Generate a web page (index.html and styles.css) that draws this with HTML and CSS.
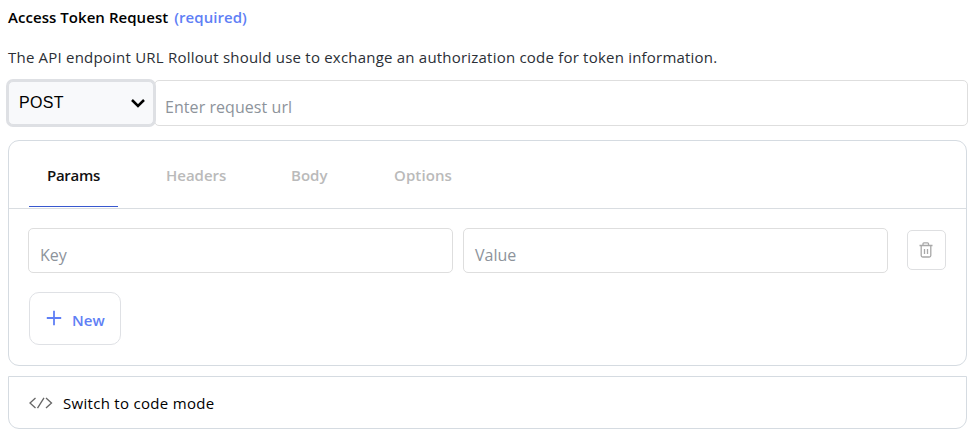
FILE: index.html
```html
<!DOCTYPE html>
<html lang="en">
<head>
<meta charset="utf-8">
<title>Access Token Request</title>
<link rel="stylesheet" href="styles.css">
</head>
<body>
<main class="form">
  <h2 class="title"><span class="name">Access Token Request</span><span class="required">(required)</span></h2>
  <p class="description">The API endpoint URL Rollout should use to exchange an authorization code for token information.</p>
  <div class="request">
    <button class="method" type="button"><span>POST</span>
      <svg class="chevron" width="16" height="10" viewBox="0 0 16 10"><path d="M2 2L8 8L14 2"/></svg>
    </button>
    <div class="field url"><span>Enter request url</span></div>
  </div>
  <section class="panel">
    <nav class="tabs">
      <a class="tab params active">Params</a>
      <a class="tab headers">Headers</a>
      <a class="tab body-tab">Body</a>
      <a class="tab options">Options</a>
    </nav>
    <div class="row">
      <div class="field"><span>Key</span></div>
      <div class="field"><span>Value</span></div>
      <button class="delete" type="button" aria-label="Delete">
        <svg width="14" height="16" viewBox="0 0 14 16"><path d="M.5 3.500H13.500M4 3V1.700Q4 .8 4.900 .8H8.600Q9.500 .8 9.500 1.700V3M2.200 3.500V13.500Q2.200 15 3.700 15H10.300Q11.800 15 11.800 13.500V3.500M5.500 7V12M8.500 7V12"/></svg>
      </button>
    </div>
    <button class="new" type="button">
      <svg width="16" height="16" viewBox="0 0 16 16"><path d="M8 .8V15.200M.8 8H15.200"/></svg>
      <span>New</span>
    </button>
  </section>
  <section class="code-mode">
    <svg width="24" height="12" viewBox="0 0 24 12"><path d="M6.500 1L1 6L6.500 11M15 .8L8.500 11.200M17 1L22.500 6L17 11"/></svg>
    <span>Switch to code mode</span>
  </section>
</main>
</body>
</html>
```
FILE: styles.css
```css
* { box-sizing: border-box; }
body {
  margin: 0;
  background: #fff;
  color: #000;
  font-family: "Open Sans", "Noto Sans", sans-serif;
  font-size: 15px;
}
svg { display: block; flex: none; fill: none; stroke: currentColor; }
button { margin: 0; background: #fff; font: inherit; }
.form { height: 437px; padding: 6px 10px 0 8px; }
.title { display: flex; gap: 6px; margin: 0; font-size: 15px; font-weight: 600; line-height: 22px; white-space: nowrap; letter-spacing: .05px; }
.required { color: #5f7ff5; }
.description { margin: 18px 0 0; color: #2b2f36; font-size: 15px; line-height: 22px; white-space: nowrap; letter-spacing: .21px; }
.request { display: flex; height: 46px; margin: 12px -1px 0 0; }
.method {
  display: flex;
  align-items: center;
  justify-content: space-between;
  width: 146px;
  height: 44px;
  margin-top: 1px;
  padding: 0 7px 1px 10px;
  border: 1px solid #dee0e4;
  border-radius: 5px;
  background: #f8f9fb;
  box-shadow: 0 0 0 2px #dee0e4;
  color: #000;
  font: 16px "Liberation Sans", sans-serif;
  letter-spacing: .3px;
  z-index: 1;
}
.chevron { stroke-width: 2.5; }
.field {
  display: flex;
  flex: 1;
  align-items: center;
  height: 45px;
  padding: 8px 11px 0;
  border: 1px solid #dedede;
  border-radius: 5px;
  color: #8d939b;
  font-size: 16px;
  line-height: 22px;
}
.url { height: 46px; padding-left: 10px; letter-spacing: .06px; }
.panel { height: 226px; margin-top: 14px; border: 1px solid #d5dbe1; border-radius: 11px; }
.tabs { display: flex; height: 68px; padding-left: 20px; border-bottom: 1px solid #d9dde1; }
.tab { height: 66px; padding: 23px 0 0 18px; color: #bababa; font-size: 15px; font-weight: 600; line-height: 22px; }
.params { width: 89px; margin-right: 30px; letter-spacing: -.3px; }
.headers { width: 96px; margin-right: 29px; }
.body-tab { width: 73px; margin-right: 30px; }
.options { letter-spacing: .1px; }
.active { border-bottom: 1px solid #3858cf; color: #111; }
.row { display: flex; gap: 10px; margin: 19px 20px 0 19px; }
.delete { display: flex; align-items: center; justify-content: center; width: 39px; height: 40px; margin: 2px 0 0 9px; padding: 0 1px 0 0; border: 1px solid #dedfe1; border-radius: 5px; color: #a8a8a8; }
.delete svg { stroke-width: 1.3; }
.new { display: flex; align-items: center; gap: 10px; width: 92px; height: 53px; margin: 19px 0 0 20px; padding: 0 0 0 16px; border: 1px solid #dfe1e5; border-radius: 10px; color: #5f7ff5; font-weight: 600; }
.new svg { margin-bottom: 1px; stroke-width: 1.8; }
.new span { margin-top: 2px; }
.code-mode { display: flex; align-items: center; gap: 10px; height: 53px; margin-top: 10px; padding-left: 20px; border: 1px solid #d5dbe1; border-radius: 0 0 11px 11px; letter-spacing: .3px; }
.code-mode svg { color: #666; stroke-width: 1.3; }
.code-mode span { margin-top: 1px; }
```
